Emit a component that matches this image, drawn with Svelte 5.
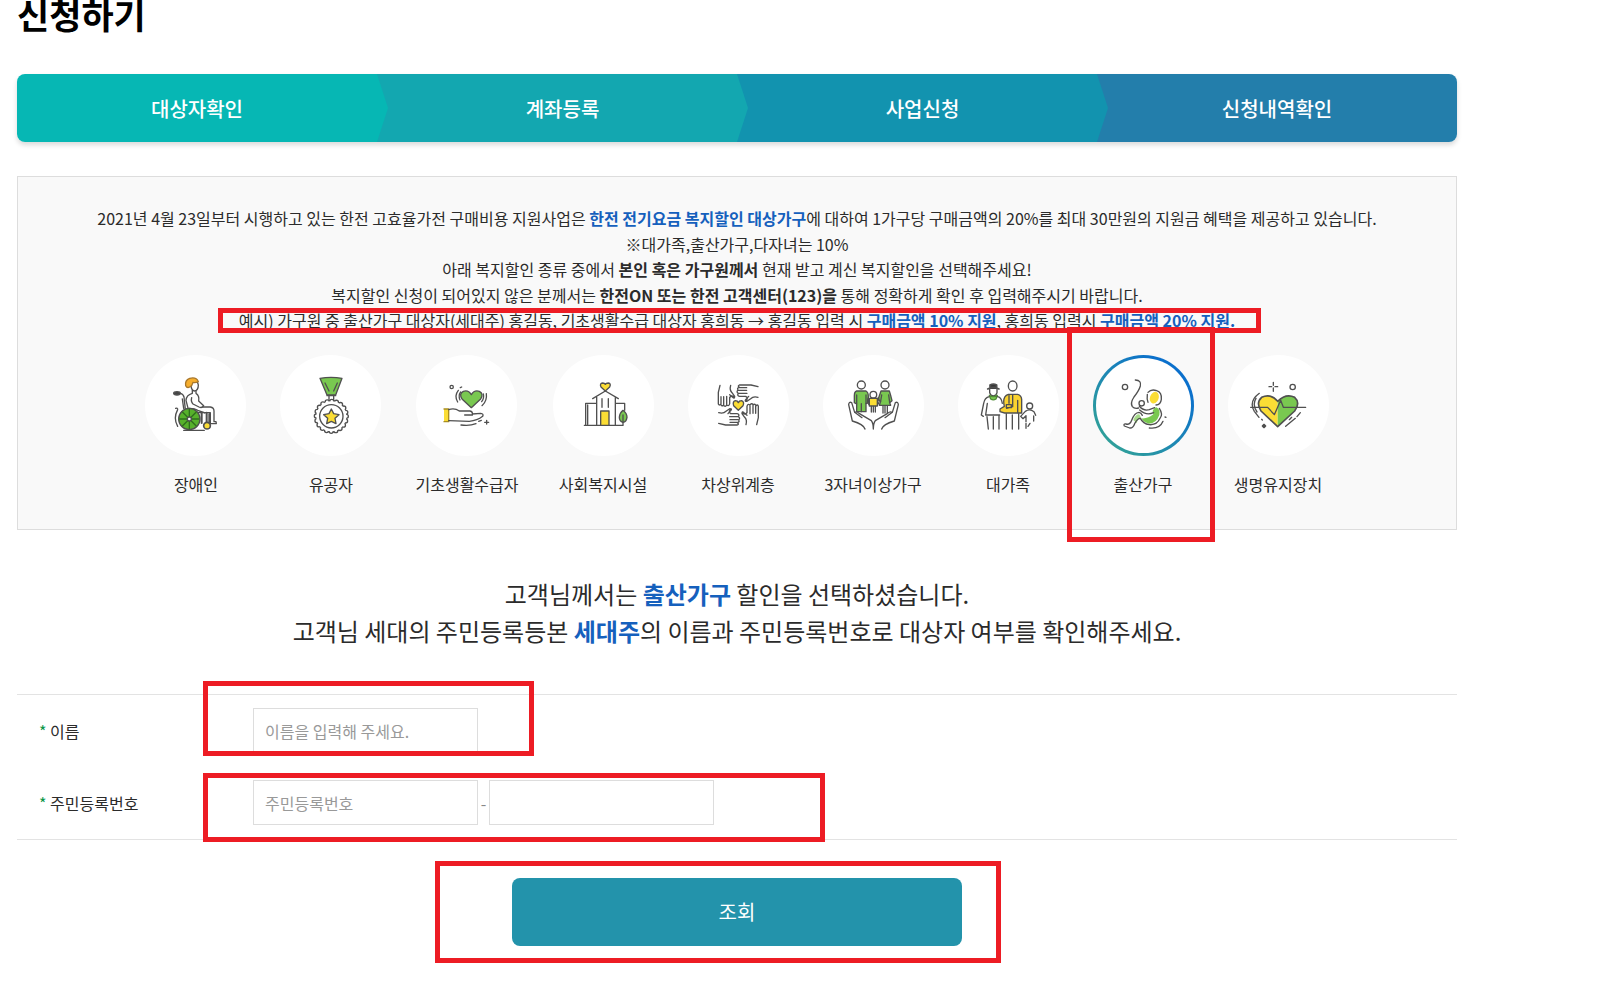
<script>
  const steps = ['대상자확인', '계좌등록', '사업신청', '신청내역확인'];

  const discounts = [
    { id: 'disabled', label: '장애인' },
    { id: 'merit', label: '유공자' },
    { id: 'basic', label: '기초생활수급자' },
    { id: 'facility', label: '사회복지시설' },
    { id: 'nearPoor', label: '차상위계층' },
    { id: 'threeKids', label: '3자녀이상가구' },
    { id: 'bigFamily', label: '대가족' },
    { id: 'birth', label: '출산가구' },
    { id: 'lifeSupport', label: '생명유지장치' }
  ];

  let selected = $state('birth');
  let name = $state('');
  let idFront = $state('');
  let idBack = $state('');

  let selectedLabel = $derived(discounts.find((d) => d.id === selected).label);

  function handleSubmit(event) {
    event.preventDefault();
  }
</script>

{#snippet icon(id)}
  <svg class="icon" viewBox="0 0 303 303" aria-hidden="true">
    {#if id === 'disabled'}
      <path d="M140 78 Q158 74 160 90 Q160 107 148 108 Q139 106 138 92 Z" fill="#fff" />
      <path d="M122 92 Q119 76 134 70 Q154 65 160 80 Q150 84 144 82 Q142 92 134 96 Q126 100 122 92 Z" fill="#f6ae2d" stroke="#a9772a" />
      <ellipse cx="96" cy="115" rx="10" ry="5" fill="#444" />
      <path d="M106 115 Q115 117 117 126 L121 163 M112 132 L116 160" />
      <path d="M142 106 V115 Q124 120 123 136 L130 163 M153 108 V115 Q164 122 161 138 L176 152 Q172 160 162 156 L144 147 Q137 140 140 128" />
      <path d="M133 160 Q150 160 158 166 L180 174 M174 156 H196 Q207 158 207 168 V200 H213 L214 206 H196 V173 H160" />
      <path d="M170 173 V204 M185 173 V203 M193 177 V218" stroke-width="6" />
      <circle cx="133" cy="192" r="32" fill="#57b12c" />
      <path d="M133 163 V221 M104 192 H162 M113 172 L153 212 M153 172 L113 212" stroke="#2f6f1c" />
      <circle cx="133" cy="192" r="6" fill="#fff" />
      <path d="M98 164 Q84 190 98 214 M92 160 Q96 158 98 162 M116 226 H178" />
      <circle cx="186" cy="212" r="10" fill="#fbdd35" stroke-width="5" />
    {:else if id === 'merit'}
      <path d="M120 70 Q153 64 186 70 L167 120 H141 Z" fill="#79c850" />
      <path d="M135 84 L147 108 M172 84 L161 108 M147 121 V134 M161 121 V134 M141 122 H167" />
      <circle cx="154" cy="184" r="45" stroke-dasharray="0 14.14" stroke-width="16" />
      <circle cx="154" cy="184" r="45" stroke="#fff" stroke-dasharray="0 14.14" stroke-width="8" />
      <circle cx="154" cy="184" r="45" fill="#fff" stroke="none" />
      <circle cx="154" cy="184" r="35" />
      <path d="M154 162 L161 176 L177 179 L165 190 L168 206 L154 199 L140 206 L143 190 L131 179 L147 176 Z" fill="#fbdd35" />
    {:else if id === 'basic'}
      <path d="M166 158 L138 132 Q128 116 142 109 Q157 104 166 119 Q175 104 190 109 Q204 116 194 132 Z" fill="#79c850" />
      <circle cx="107" cy="96" r="5" />
      <path d="M133 98 L137 96 M127 106 Q114 122 125 141 M134 111 Q126 121 132 135 M211 116 Q214 138 198 152 M202 117 Q205 130 197 140" />
      <path d="M84 162 H98 V200 H84" fill="#fbdd35" stroke="#a98e22" />
      <path d="M98 164 Q116 158 130 168 H162 Q171 170 169 180 H146 M169 177 L194 175 Q204 176 200 184 Q184 197 160 199 L98 197" />
      <path d="M135 210 Q160 214 180 206 M188 199 L196 196 M212 196 V207 M206 202 H218" />
    {:else if id === 'facility'}
      <path d="M157 108 L144 96 Q139 85 149 84 Q155 84 157 88 Q159 84 166 84 Q175 85 170 96 Z" fill="#fbdd35" />
      <path d="M119 131 L157 108 L196 131 M131 126 V211 M187 126 V211 M98 211 V145 H131 M187 145 H215 V166 M94 211 H209 M147 131 V157 M166 131 V157 M104 150 V208" />
      <path d="M143 211 V168 H168 V211 Z" fill="#fbdd35" />
      <path d="M210 166 Q222 175 222 187 Q220 201 210 202 Q199 200 199 187 Q200 174 210 166 Z" fill="#79c850" />
      <path d="M210 180 V211" />
    {:else if id === 'nearPoor'}
      {#each [0, 90, 180, 270] as angle}
        <g transform="rotate({angle} 151 150)">
          <path d="M96 91 L91 112 V147 Q94 153 98 147 Q100 155 106 151 Q112 157 116 150 Q123 155 125 146 V127 M99 125 V146 M107 125 V149 M116 124 V148 M125 128 Q130 119 137 126 M128 91 Q124 105 132 113 L140 124 Q140 133 134 127 L125 119" />
        </g>
      {/each}
      <path d="M151 166 L137 152 Q133 140 142 137 Q149 137 151 143 Q153 137 161 137 Q170 141 165 152 Z" fill="#fbdd35" />
    {:else if id === 'threeKids'}
      <circle cx="115" cy="90" r="12" fill="#fff" />
      <circle cx="186" cy="90" r="12" fill="#fff" />
      <path d="M101 108 H129 Q136 112 136 125 V143 L129 146 V170 H101 V147 L94 143 V122 Q94 110 101 108 Z" fill="#79c850" />
      <path d="M101 120 V146 M129 120 V146 M115 146 V170" />
      <path d="M174 108 H199 Q203 120 207 137 L200 143 L203 151 H169 L173 139 L165 134 Z" fill="#79c850" />
      <path d="M176 120 L173 138 M197 120 L200 142 M180 152 V174 M193 152 V174 M186 152 V174" />
      <circle cx="151" cy="119" r="10" fill="#fff" />
      <path d="M139 130 H163 V153 H139 Z" fill="#fbdd35" />
      <path d="M136 128 Q130 140 138 149 M166 128 Q172 140 164 149 M145 154 V171 M157 154 V171 M151 154 V171" />
      <path d="M126 222 Q122 208 88 198 L77 149 Q78 139 86 143 L95 172 L117 188 M95 172 Q102 168 108 175 L145 197 Q151 205 151 222 M176 222 Q180 208 214 198 L226 149 Q225 139 217 143 L208 172 L186 188 M208 172 Q201 168 194 175 L157 197 Q151 205 151 222" fill="none" />
    {:else if id === 'bigFamily'}
      <path d="M89 102 Q106 94 123 102 M96 96 V90 Q106 85 116 90 V97 Z" fill="#333" stroke-width="5" />
      <path d="M95 103 V113 Q97 122 106 123 Q115 122 117 113 V103" />
      <path d="M94 121 Q106 129 118 121 L114 132 Q106 137 98 132 Z" fill="#79c850" stroke="#4f8c33" />
      <path d="M94 125 Q80 128 77 145 L70 180 L76 184 M88 145 L83 180 H125 M118 125 Q130 126 133 145 M87 185 L91 222 M106 185 V222 M123 180 V222" />
      <path d="M151 118 H179 Q190 121 191 133 V174 H140 L126 170 V162 L139 154 Q132 124 151 118 Z" fill="#fbd32f" />
      <path d="M164 119 V155 L146 160 M153 121 V145 M179 136 V173 M145 149 H160 V158 H145 Z M145 176 V222 M163 180 V222 M182 176 V222" />
      <ellipse cx="164" cy="93" rx="13" ry="15" fill="#fff" />
      <circle cx="215" cy="153" r="9" fill="#fff" />
      <path d="M202 169 Q215 160 228 170 L233 181 M202 169 L188 184 L195 191 L204 182 V200 M227 183 V198 M204 205 V220 M216 205 L210 214" />
    {:else if id === 'birth'}
      <circle cx="96" cy="96" r="8" />
      <path d="M127 75 Q146 76 142 93 Q138 107 123 126 Q111 144 118 155 Q124 162 137 159" />
      <circle cx="146" cy="145" r="8" />
      <ellipse cx="184" cy="128" rx="13" ry="18" fill="#fbdd35" stroke="none" transform="rotate(20 184 128)" />
      <path d="M165 112 Q175 101 191 107 Q207 112 205 133 Q203 149 189 150 M163 118 Q161 133 165 142" />
      <path d="M190 157 Q203 163 199 180 Q190 206 168 206 Q152 203 145 190 Q165 192 181 178 Q174 164 190 157 Z" fill="#79c850" stroke="none" />
      <path d="M121 195 Q128 177 139 178 L145 190 Q135 188 131 205 Z" fill="#a6da8b" stroke="none" />
      <path d="M139 153 Q151 169 169 164 L185 158 M140 165 Q160 183 182 173 M199 160 Q211 178 201 190 Q192 211 169 209 Q150 206 142 190 Q133 190 125 206 Q120 220 110 219 L94 213 Q90 206 99 207 Q111 211 116 196 Q124 173 138 172 Q144 173 148 181 M169 219 Q200 223 210 199 M216 186 L219 187" />
    {:else if id === 'lifeSupport'}
      <path d="M149 215 L99 168 Q83 143 101 127 Q128 114 149 139 Z" fill="#fbdd35" stroke="none" />
      <path d="M149 215 L200 168 Q218 143 200 127 Q174 114 149 139 Z" fill="#79c850" stroke="none" />
      <path d="M149 215 L99 168 Q83 143 101 127 Q128 114 149 139 Q174 114 200 127 Q218 143 200 168 Z" stroke-width="5" />
      <path d="M68 157 H119 L139 179 L158 136 L166 157 H233" />
      <circle cx="194" cy="96" r="8" />
      <path d="M136 82 V91 M136 99 V109 M123 95 H131 M141 95 H149 M94 115 Q61 139 79 169 L93 187 M84 130 Q72 149 87 171 M101 193 L103 195 M217 173 L207 185 M202 190 L173 214 M191 187 L184 194" />
      <path d="M108 208 L113 213 L108 218 L103 213 Z" fill="#444" />
    {/if}
  </svg>
{/snippet}

<main class="page">
  <h1>신청하기</h1>

  <ol class="steps">
    {#each steps as step}
      <li>{step}</li>
    {/each}
  </ol>

  <section class="guide">
    <div class="guide-text">
      <p>
        2021년 4월 23일부터 시행하고 있는 한전 고효율가전 구매비용 지원사업은
        <strong class="blue">한전 전기요금 복지할인 대상가구</strong>에 대하여 1가구당 구매금액의 20%를 최대 30만원의 지원금 혜택을 제공하고 있습니다.
      </p>
      <p>※대가족,출산가구,다자녀는 10%</p>
      <p>아래 복지할인 종류 중에서 <strong>본인 혹은 가구원께서</strong> 현재 받고 계신 복지할인을 선택해주세요!</p>
      <p>복지할인 신청이 되어있지 않은 분께서는 <strong>한전ON 또는 한전 고객센터(123)을</strong> 통해 정확하게 확인 후 입력해주시기 바랍니다.</p>
      <p class="example">
        예시) 가구원 중 출산가구 대상자(세대주) 홍길동, 기초생활수급 대상자 홍희동 → 홍길동 입력 시
        <strong class="blue">구매금액 10% 지원</strong>, 홍희동 입력시 <strong class="blue">구매금액 20% 지원.</strong>
        <span class="mark mark-example"></span>
      </p>
    </div>

    <ul class="discounts">
      {#each discounts as discount}
        <li>
          <button
            type="button"
            class="discount"
            class:active={selected === discount.id}
            aria-pressed={selected === discount.id}
            onclick={() => (selected = discount.id)}
          >
            <span class="circle">{@render icon(discount.id)}</span>
            <span>{discount.label}</span>
          </button>
          {#if discount.id === 'birth'}
            <span class="mark mark-discount"></span>
          {/if}
        </li>
      {/each}
    </ul>
  </section>

  <p class="notice">
    고객님께서는 <strong class="blue">{selectedLabel}</strong> 할인을 선택하셨습니다.<br />
    고객님 세대의 주민등록등본 <strong class="blue">세대주</strong>의 이름과 주민등록번호로 대상자 여부를 확인해주세요.
  </p>

  <form onsubmit={handleSubmit}>
    <div class="fields">
      <div class="row">
        <label for="name"><em>*</em> 이름</label>
        <div class="inputs">
          <input id="name" type="text" placeholder="이름을 입력해 주세요." bind:value={name} />
          <span class="mark mark-name"></span>
        </div>
      </div>
      <div class="row">
        <label for="id-front"><em>*</em> 주민등록번호</label>
        <div class="inputs">
          <input id="id-front" type="text" placeholder="주민등록번호" maxlength="6" bind:value={idFront} />
          <span class="dash">-</span>
          <input type="password" aria-label="주민등록번호 뒷자리" maxlength="7" bind:value={idBack} />
          <span class="mark mark-id"></span>
        </div>
      </div>
    </div>

    <div class="actions">
      <button type="submit" class="submit">조회</button>
      <span class="mark mark-submit"></span>
    </div>
  </form>
</main>

<style>
  :global(body) {
    margin: 0;
    background: #fff;
  }

  .page {
    max-width: 1440px;
    margin: 0 17px;
    padding-bottom: 28px;
    font-family: "Noto Sans CJK KR", "Noto Sans", sans-serif;
    font-size: 16px;
    color: #2b2b2b;
    overflow-wrap: break-word;
    word-break: keep-all;
  }

  h1 {
    margin: 0;
    height: 74px;
    font-size: 35px;
    line-height: 28px;
    font-weight: 700;
    color: #000;
  }

  .steps {
    display: grid;
    grid-template-columns: repeat(4, 1fr);
    height: 68px;
    margin: 0 0 34px;
    padding: 0;
    list-style: none;
    border-radius: 8px;
    box-shadow: 0 3px 5px rgba(0, 0, 0, 0.15);
  }

  .steps li {
    position: relative;
    display: flex;
    align-items: center;
    justify-content: center;
    background: var(--step);
    color: #fff;
    font-size: 20px;
    font-weight: 500;
  }

  .steps li:nth-child(1) {
    --step: #06b7b4;
    border-radius: 8px 0 0 8px;
  }

  .steps li:nth-child(2) {
    --step: #13a7b0;
    padding-left: 11px;
  }

  .steps li:nth-child(3) {
    --step: #1293af;
    padding-left: 11px;
  }

  .steps li:nth-child(4) {
    --step: #237eab;
    border-radius: 0 8px 8px 0;
  }

  .steps li:not(:last-child)::after {
    content: '';
    position: absolute;
    z-index: 1;
    left: 100%;
    top: 0;
    width: 11px;
    height: 100%;
    background: var(--step);
    clip-path: polygon(0 0, 100% 50%, 0 100%);
  }

  .guide {
    border: 1px solid #ddd;
    background: #f9f9f9;
    padding: 29px 16px 33px;
    text-align: center;
  }

  .guide-text {
    font-size: 16px;
    line-height: 1.6;
  }

  .guide-text p {
    margin: 0;
  }

  .blue {
    color: #1560bd;
  }

  .mark {
    position: absolute;
    box-sizing: border-box;
    border: 5px solid #ed1c24;
    pointer-events: none;
  }

  .guide-text .example {
    position: relative;
    width: fit-content;
    margin: 0 auto;
  }

  .mark-example {
    inset: 0 -26px 1px -21px;
  }

  .discounts {
    display: flex;
    flex-wrap: wrap;
    justify-content: center;
    gap: 34px;
    margin: 21px 0 0;
    padding: 0;
    list-style: none;
  }

  .discounts li {
    position: relative;
    min-width: 101px;
  }

  .discount {
    display: flex;
    flex-direction: column;
    align-items: center;
    gap: 16px;
    width: 100%;
    padding: 0;
    border: 0;
    background: none;
    color: inherit;
    font: inherit;
    line-height: 24px;
    white-space: nowrap;
    cursor: pointer;
  }

  .circle {
    box-sizing: border-box;
    display: flex;
    align-items: center;
    justify-content: center;
    width: 101px;
    height: 101px;
    border: 3px solid transparent;
    border-radius: 50%;
    background: #fff;
  }

  .active .circle {
    background:
      linear-gradient(#fff, #fff) padding-box,
      linear-gradient(to top right, #2f9f9b 15%, #0b70cc 80%) border-box;
  }

  .icon {
    flex-shrink: 0;
    width: 101px;
    height: 101px;
    fill: none;
    stroke: #505050;
    stroke-width: 4;
    stroke-linecap: round;
    stroke-linejoin: round;
  }

  .mark-discount {
    inset: -28px -21px -46px -26px;
  }

  .notice {
    margin: 45px 0;
    font-size: 24px;
    line-height: 37px;
    text-align: center;
  }

  .fields {
    border-top: 1px solid #e3e3e3;
    border-bottom: 1px solid #e3e3e3;
  }

  .row {
    display: grid;
    grid-template-columns: 214px 1fr;
    align-items: center;
    height: 72px;
    padding-left: 22px;
  }

  label em {
    color: #0a9648;
    font-style: normal;
  }

  .inputs {
    position: relative;
    display: flex;
    align-items: center;
  }

  input {
    box-sizing: border-box;
    width: 225px;
    height: 45px;
    padding: 0 11px;
    border: 1px solid #ddd;
    background: #fff;
    font: inherit;
    color: inherit;
  }

  input::placeholder {
    color: #999;
    opacity: 1;
  }

  .dash {
    width: 11px;
    text-align: center;
    color: #888;
  }

  .mark-name {
    left: -50px;
    top: -27px;
    width: 331px;
    height: 75px;
  }

  .mark-id {
    left: -50px;
    top: -7px;
    width: 622px;
    height: 69px;
  }

  .actions {
    position: relative;
    width: fit-content;
    margin: 38px auto 0;
  }

  .submit {
    display: block;
    width: 450px;
    height: 68px;
    border: 0;
    border-radius: 8px;
    background: #2393ab;
    color: #fff;
    font: inherit;
    font-size: 20px;
    cursor: pointer;
  }

  .mark-submit {
    inset: -17px -39px -17px -77px;
  }
</style>
